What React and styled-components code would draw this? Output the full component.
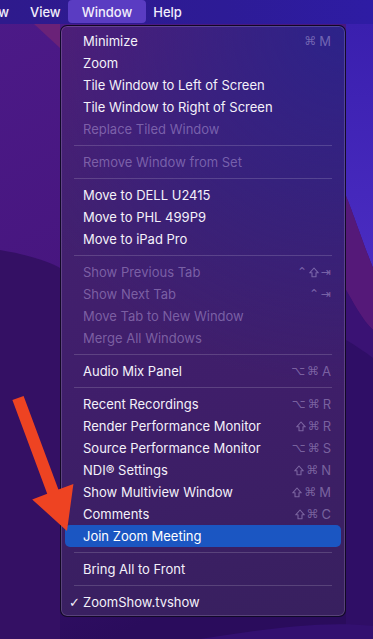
import React from "react";
import styled, { createGlobalStyle, css } from "styled-components";

const sections = [
  [
    { label: "Minimize", keys: ["⌘", "M"] },
    { label: "Zoom" },
    { label: "Tile Window to Left of Screen" },
    { label: "Tile Window to Right of Screen" },
    { label: "Replace Tiled Window", disabled: true },
  ],
  [{ label: "Remove Window from Set", disabled: true }],
  [
    { label: "Move to DELL U2415" },
    { label: "Move to PHL 499P9" },
    { label: "Move to iPad Pro" },
  ],
  [
    { label: "Show Previous Tab", disabled: true, keys: ["⌃", "⇧", "⇥"] },
    { label: "Show Next Tab", disabled: true, keys: ["⌃", "⇥"] },
    { label: "Move Tab to New Window", disabled: true },
    { label: "Merge All Windows", disabled: true },
  ],
  [{ label: "Audio Mix Panel", keys: ["⌥", "⌘", "A"] }],
  [
    { label: "Recent Recordings", keys: ["⌥", "⌘", "R"] },
    { label: "Render Performance Monitor", keys: ["⇧", "⌘", "R"] },
    { label: "Source Performance Monitor", keys: ["⌥", "⌘", "S"] },
    { label: "NDI® Settings", keys: ["⇧", "⌘", "N"] },
    { label: "Show Multiview Window", keys: ["⇧", "⌘", "M"] },
    { label: "Comments", keys: ["⇧", "⌘", "C"] },
    { label: "Join Zoom Meeting", active: true },
  ],
  [{ label: "Bring All to Front" }],
  [{ label: "ZoomShow.tvshow", checked: true }],
];

// the font's shift glyph is too small, so draw it
function ShiftIcon() {
  return (
    <svg width="10" height="11" viewBox="0 0 10 11">
      <path
        d="M5 1 L9.3 5.8 H7 V9.8 H3 V5.8 H0.7 Z"
        fill="none"
        stroke="currentColor"
        strokeWidth="1.1"
        strokeLinejoin="round"
      />
    </svg>
  );
}

export default function App() {
  return (
    <Page>
      <GlobalStyles />
      <Wallpaper viewBox="0 0 373 639" preserveAspectRatio="none">
        <defs>
          <linearGradient id="base" x1="0" y1="0" x2="0.3" y2="1">
            <stop offset="0" stopColor="#4c1a88" />
            <stop offset="0.45" stopColor="#47167f" />
            <stop offset="1" stopColor="#2a0c5c" />
          </linearGradient>
          <linearGradient id="blue" x1="0" y1="0" x2="0" y2="1">
            <stop offset="0" stopColor="#3a1fae" />
            <stop offset="1" stopColor="#4a2cc2" />
          </linearGradient>
        </defs>
        <rect width="373" height="639" fill="url(#base)" />
        <path d="M0 250 C 30 255, 50 262, 60 268 L 60 639 L 0 639 Z" fill="#341064" />
        <path d="M34 24 L60 24 L60 48 Z" fill="#6a2278" />
        <path d="M346 24 L373 24 L373 268 C 362 240, 352 210, 346 196 Z" fill="url(#blue)" />
        <path d="M346 196 C 352 210, 362 240, 373 268 L373 330 C 362 320, 352 300, 346 290 Z" fill="#551979" />
        <path d="M346 290 C 352 300, 362 320, 373 330 L373 639 L346 639 Z" fill="#3a1274" />
        <path d="M346 340 C 355 345, 365 352, 373 358 L373 639 L346 639 Z" fill="#2f0e66" />
        <path d="M200 639 C 260 630, 320 620, 373 626 L373 639 Z" fill="#331070" />
      </Wallpaper>

      <MenuBar>
        <BarItem $clipped>ow</BarItem>
        <BarItem>View</BarItem>
        <BarItem $open>Window</BarItem>
        <BarItem>Help</BarItem>
      </MenuBar>

      <Dropdown>
        {sections.map((items, si) => (
          <React.Fragment key={si}>
            {si > 0 && <Separator />}
            {items.map((it) => (
              <Row key={it.label} $disabled={it.disabled} $active={it.active}>
                <Check>{it.checked ? "✓" : ""}</Check>
                <Label>{it.label}</Label>
                {it.keys && (
                  <Keys>
                    {it.keys.map((k, i) => (
                      <Key key={i} $letter={/[A-Z]/.test(k)}>
                        {k === "⇧" ? <ShiftIcon /> : k}
                      </Key>
                    ))}
                  </Keys>
                )}
              </Row>
            ))}
          </React.Fragment>
        ))}
      </Dropdown>

      <Pointer viewBox="0 0 373 639">
        <polygon
          points="12.4,400.1 23.6,395.9 58.4,489.6 73.4,484 67,531 32.2,499.4 47.2,493.8"
          fill="#ee4322"
        />
      </Pointer>
    </Page>
  );
}

const GlobalStyles = createGlobalStyle`
  html, body {
    margin: 0;
    padding: 0;
    background: #2a0c5c;
  }
  body {
    font-family: Inter, "Liberation Sans", sans-serif;
    -webkit-font-smoothing: antialiased;
  }
`;

const Page = styled.div`
  position: relative;
  width: 373px;
  height: 639px;
  overflow: hidden;
`;

const Wallpaper = styled.svg`
  position: absolute;
  inset: 0;
  width: 100%;
  height: 100%;
  z-index: 0;
`;

const Pointer = styled.svg`
  position: absolute;
  inset: 0;
  width: 100%;
  height: 100%;
  z-index: 3;
  pointer-events: none;
`;

const MenuBar = styled.div`
  position: relative;
  z-index: 1;
  height: 24px;
  display: flex;
  align-items: flex-start;
  background: linear-gradient(90deg, #2e1a8c, #2d1b96 60%, #2e1ca4);
  color: #f2eefc;
  font-size: 13px;
  font-weight: 500;
`;

const BarItem = styled.div`
  height: 23px;
  display: flex;
  align-items: center;
  padding: 0 10.5px;
  border-radius: 4px;
  ${(p) =>
    p.$clipped &&
    css`
      margin-left: -20px;
    `}
  ${(p) =>
    p.$open &&
    css`
      background: #5a3cc2;
      padding: 0 13.5px;
      margin: 0 -3px 0 -3px;
    `}
`;

const Dropdown = styled.div`
  position: relative;
  z-index: 2;
  margin: 1px 0 0 60px;
  width: 286px;
  box-sizing: border-box;
  padding: 4px 4px 3px;
  border-radius: 7px;
  border: 1px solid rgba(10, 5, 25, 0.85);
  box-shadow: inset 0 0 0 1px rgba(255, 255, 255, 0.16);
  background:
    radial-gradient(circle at 100% 0%, rgba(40, 35, 140, 0.9) 0%, rgba(40, 35, 140, 0) 55%),
    linear-gradient(170deg, #561d73 0%, #43206f 30%, #3f1e6a 60%, #38205f 100%);
  color: #f4f1fa;
  font-size: 13px;
`;

const Row = styled.div`
  height: 22px;
  display: flex;
  align-items: center;
  padding: 0 10px 0 4px;
  border-radius: 5px;
  color: ${(p) => (p.$disabled ? "rgba(210, 190, 240, 0.42)" : "#f4f1fa")};
  ${(p) =>
    p.$active &&
    css`
      background: #1b56c2;
      color: #ffffff;
    `}
`;

const Check = styled.span`
  width: 14px;
  font-size: 13px;
  font-family: "DejaVu Sans", sans-serif;
`;

const Label = styled.span`
  flex: 1;
  white-space: nowrap;
`;

const Keys = styled.span`
  display: flex;
  align-items: center;
  gap: 2px;
  color: rgba(210, 195, 240, 0.42);
`;

const Key = styled.span`
  display: flex;
  align-items: center;
  font-family: ${(p) => (p.$letter ? 'Inter, "Liberation Sans", sans-serif' : '"DejaVu Sans", sans-serif')};
  font-size: ${(p) => (p.$letter ? "13px" : "12px")};
  margin-left: ${(p) => (p.$letter ? "1px" : "0")};
`;

const Separator = styled.div`
  height: 1px;
  margin: 5px 9px;
  background: rgba(255, 255, 255, 0.16);
`;
